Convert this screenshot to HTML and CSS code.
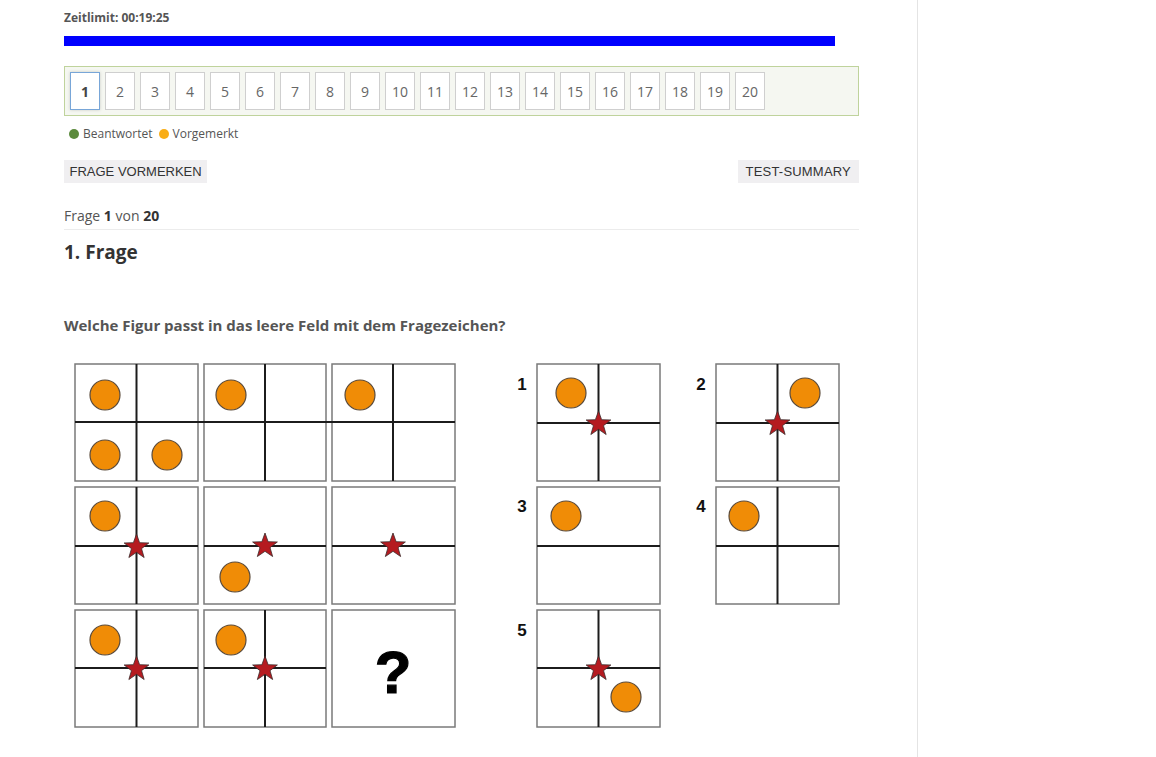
FILE: index.html
```html
<!DOCTYPE html>
<html lang="de">
<head>
<meta charset="utf-8">
<title>Frage 1 von 20</title>
<link rel="stylesheet" href="styles.css">
</head>
<body>
<div class="layout">
  <main class="main">
    <p class="timer">Zeitlimit: 00:19:25</p>
    <div class="progress"></div>
    <nav class="pager">
      <span class="page current">1</span>
      <span class="page">2</span>
      <span class="page">3</span>
      <span class="page">4</span>
      <span class="page">5</span>
      <span class="page">6</span>
      <span class="page">7</span>
      <span class="page">8</span>
      <span class="page">9</span>
      <span class="page">10</span>
      <span class="page">11</span>
      <span class="page">12</span>
      <span class="page">13</span>
      <span class="page">14</span>
      <span class="page">15</span>
      <span class="page">16</span>
      <span class="page">17</span>
      <span class="page">18</span>
      <span class="page">19</span>
      <span class="page">20</span>
    </nav>
    <div class="legend">
      <span class="dot dot-green"></span><span class="legend-label">Beantwortet</span>
      <span class="dot dot-orange"></span><span class="legend-label">Vorgemerkt</span>
    </div>
    <div class="actions">
      <button class="btn">FRAGE VORMERKEN</button>
      <button class="btn btn-wide">TEST-SUMMARY</button>
    </div>
    <p class="counter">Frage <b>1</b> von <b>20</b></p>
    <h2 class="title">1. Frage</h2>
    <p class="prompt">Welche Figur passt in das leere Feld mit dem Fragezeichen?</p>
    <svg class="figure" viewBox="64 355 795 380" xmlns="http://www.w3.org/2000/svg">
      <defs>
        <polygon id="star" points="0,-13 3.12,-4.29 12.36,-4.02 5.04,1.64 7.64,10.52 0,5.3 -7.64,10.52 -5.04,1.64 -12.36,-4.02 -3.12,-4.29" fill="#b51b20" stroke="#3a2a2a" stroke-width="0.8" stroke-linejoin="round"/>
      </defs>
      <g fill="#fff" stroke="#7a7a7a" stroke-width="1.5">
        <rect x="75" y="364" width="123" height="117"/>
        <rect x="204" y="364" width="122" height="117"/>
        <rect x="332" y="364" width="123" height="117"/>
        <rect x="75" y="487" width="123" height="117"/>
        <rect x="204" y="487" width="122" height="117"/>
        <rect x="332" y="487" width="123" height="117"/>
        <rect x="75" y="610" width="123" height="117"/>
        <rect x="204" y="610" width="122" height="117"/>
        <rect x="332" y="610" width="123" height="117"/>
        <rect x="537" y="364" width="123" height="117"/>
        <rect x="716" y="364" width="123" height="117"/>
        <rect x="537" y="487" width="123" height="117"/>
        <rect x="716" y="487" width="123" height="117"/>
        <rect x="537" y="610" width="123" height="117"/>
      </g>
      <g stroke="#1c1c1c" stroke-width="2">
        <line x1="75" y1="422" x2="455" y2="422"/>
        <line x1="136.5" y1="364" x2="136.5" y2="481"/>
        <line x1="265" y1="364" x2="265" y2="481"/>
        <line x1="393" y1="364" x2="393" y2="481"/>
        <line x1="75" y1="546" x2="198" y2="546"/>
        <line x1="204" y1="546" x2="326" y2="546"/>
        <line x1="332" y1="546" x2="455" y2="546"/>
        <line x1="136.5" y1="487" x2="136.5" y2="604"/>
        <line x1="75" y1="668" x2="198" y2="668"/>
        <line x1="204" y1="668" x2="326" y2="668"/>
        <line x1="136.5" y1="610" x2="136.5" y2="727"/>
        <line x1="265" y1="610" x2="265" y2="727"/>
        <line x1="537" y1="423" x2="660" y2="423"/>
        <line x1="598.5" y1="364" x2="598.5" y2="481"/>
        <line x1="716" y1="423" x2="839" y2="423"/>
        <line x1="777.5" y1="364" x2="777.5" y2="481"/>
        <line x1="537" y1="546" x2="660" y2="546"/>
        <line x1="716" y1="546" x2="839" y2="546"/>
        <line x1="777.5" y1="487" x2="777.5" y2="604"/>
        <line x1="537" y1="668" x2="660" y2="668"/>
        <line x1="598.5" y1="610" x2="598.5" y2="727"/>
      </g>
      <g fill="#f08c06" stroke="#5a4a3a" stroke-width="1.2">
        <circle cx="105" cy="395" r="15"/>
        <circle cx="105" cy="455" r="15"/>
        <circle cx="167" cy="455" r="15"/>
        <circle cx="231" cy="395" r="15"/>
        <circle cx="360" cy="395" r="15"/>
        <circle cx="105" cy="516" r="15"/>
        <circle cx="235" cy="577" r="15"/>
        <circle cx="105" cy="640" r="15"/>
        <circle cx="231" cy="640" r="15"/>
        <circle cx="571" cy="393" r="15"/>
        <circle cx="805" cy="393" r="15"/>
        <circle cx="566" cy="516" r="15"/>
        <circle cx="744" cy="516" r="15"/>
        <circle cx="626" cy="697" r="15"/>
      </g>
      <use href="#star" x="136.5" y="547"/>
      <use href="#star" x="265" y="546"/>
      <use href="#star" x="393" y="546"/>
      <use href="#star" x="136.5" y="669"/>
      <use href="#star" x="265" y="669"/>
      <use href="#star" x="598.5" y="424"/>
      <use href="#star" x="777.5" y="424"/>
      <use href="#star" x="598.5" y="669"/>
      <text class="qmark" x="393" y="693" text-anchor="middle">?</text>
      <g class="opt-label" text-anchor="middle">
        <text x="522" y="390">1</text>
        <text x="701" y="390">2</text>
        <text x="522" y="512">3</text>
        <text x="701" y="512">4</text>
        <text x="522" y="636">5</text>
      </g>
    </svg>
  </main>
  <aside class="sidebar"></aside>
</div>
</body>
</html>
```

FILE: styles.css
```css
html, body {
  margin: 0;
  padding: 0;
  background: #fff;
}

body {
  font-family: "Open Sans", "Noto Sans", sans-serif;
  color: #555;
}

.layout {
  display: flex;
  min-height: 100vh;
}

.main {
  width: 917px;
  flex: none;
  box-sizing: border-box;
  padding: 9px 58px 0 64px;
}

.sidebar {
  flex: 1;
  border-left: 1px solid #e4e4e4;
}

.timer {
  margin: 0;
  font-size: 12px;
  font-weight: 700;
  line-height: 18px;
  color: #555;
}

.progress {
  margin-top: 9px;
  width: 771px;
  height: 10px;
  background: #0000ff;
}

.pager {
  margin-top: 20px;
  display: flex;
  gap: 5px;
  padding: 5px;
  border: 1px solid #bfd39c;
  background: #f5f7f1;
}

.page {
  width: 30px;
  height: 38px;
  box-sizing: border-box;
  display: flex;
  align-items: center;
  justify-content: center;
  border: 1px solid #cfcfcf;
  background: #fff;
  font-size: 14px;
  color: #666;
}

.page.current {
  border-color: #78a6d8;
  box-shadow: 0 0 3px rgba(0, 0, 0, 0.18);
  font-weight: 700;
  color: #444;
}

.legend {
  margin-top: 9px;
  padding-left: 5px;
  display: flex;
  align-items: center;
  font-size: 12px;
  line-height: 18px;
  color: #555;
}

.dot {
  width: 10px;
  height: 10px;
  border-radius: 50%;
  margin-right: 4px;
}

.dot-green {
  background: #5b8a3c;
}

.dot-orange {
  background: #f9ad16;
}

.legend-label {
  margin-right: 6px;
}

.actions {
  margin-top: 17px;
  display: flex;
  justify-content: space-between;
}

.btn {
  height: 23px;
  padding: 0 5.5px;
  border: 0;
  background: #f0eff1;
  font-family: "Liberation Sans", Arial, sans-serif;
  font-size: 13px;
  line-height: 23px;
  color: #333;
}

.btn-wide {
  padding: 0 8px;
  letter-spacing: 0.2px;
}

.counter {
  margin: 23px 0 0;
  padding-bottom: 3px;
  border-bottom: 1px solid #ececec;
  font-size: 14px;
  line-height: 20px;
  color: #555;
}

.counter b {
  color: #333;
}

.title {
  margin: 8px 0 0;
  font-size: 19px;
  font-weight: 700;
  line-height: 28px;
  color: #333;
}

.prompt {
  margin: 49px 0 0;
  font-size: 15px;
  font-weight: 700;
  line-height: 20px;
  color: #555;
}

.figure {
  display: block;
  margin-top: 20px;
  width: 795px;
  height: 380px;
}

.qmark {
  font-family: "Liberation Sans", Arial, sans-serif;
  font-weight: 700;
  font-size: 60px;
  fill: #000;
  stroke: #000;
  stroke-width: 1.2px;
}

.opt-label {
  font-family: "Liberation Sans", Arial, sans-serif;
  font-weight: 700;
  font-size: 17px;
  fill: #111;
}
```
